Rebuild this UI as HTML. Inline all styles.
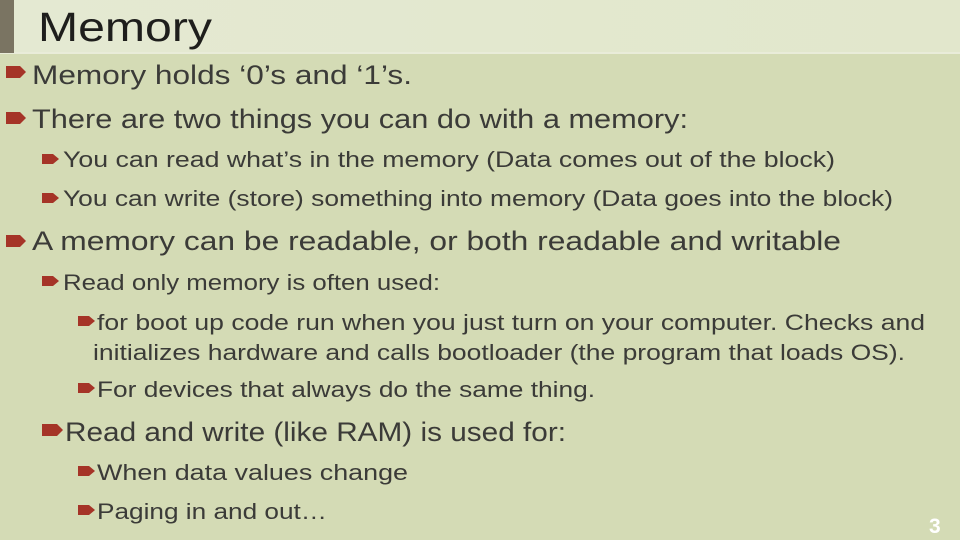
<!DOCTYPE html>
<html><head><meta charset="utf-8"><style>
html,body{margin:0;padding:0;width:960px;height:540px;overflow:hidden;background:#d4dbb5}
svg{display:block}
text{font-family:"Liberation Sans",sans-serif;fill:#3b3b38}
</style></head><body>
<svg width="960" height="540" viewBox="0 0 960 540" xmlns="http://www.w3.org/2000/svg">
<defs>
<linearGradient id="hg" x1="0" x2="1" y1="0" y2="0"><stop offset="0" stop-color="#e4e9d2"/><stop offset="1" stop-color="#e2e7cc"/></linearGradient>
</defs>
<rect x="0" y="0" width="960" height="540" fill="#d4dbb5"/>
<rect x="0" y="0" width="960" height="53" fill="url(#hg)"/>
<rect x="0" y="52" width="960" height="2" fill="#e9ecd9"/>
<rect x="0" y="0" width="14" height="53" fill="#7a7462"/>
<text x="38" y="41" font-size="41" textLength="174" lengthAdjust="spacingAndGlyphs" style="fill:#1e1e1c">Memory</text>

<g fill="#a53427">
<polygon points="6,66 20,66 26,72 20,78 6,78"/>
<polygon points="6,112 20,112 26,118 20,124 6,124"/>
<polygon points="42,154 53,154 59,159 53,164 42,164"/>
<polygon points="42,193 53,193 59,198 53,203 42,203"/>
<polygon points="6,235 20,235 26,241 20,247 6,247"/>
<polygon points="42,276 53,276 59,281 53,286 42,286"/>
<polygon points="78,316 89,316 95,321 89,326 78,326"/>
<polygon points="78,383 89,383 95,388 89,393 78,393"/>
<polygon points="42,424 57,424 63,430 57,436 42,436"/>
<polygon points="78,466 89,466 95,471 89,476 78,476"/>
<polygon points="78,505 89,505 95,510 89,515 78,515"/>
</g>

<text x="32" y="84" font-size="26.5" textLength="380" lengthAdjust="spacingAndGlyphs">Memory holds ‘0’s and ‘1’s.</text>
<text x="32" y="128" font-size="26.5" textLength="656" lengthAdjust="spacingAndGlyphs">There are two things you can do with a memory:</text>
<text x="63" y="167" font-size="22" textLength="772" lengthAdjust="spacingAndGlyphs">You can read what’s in the memory (Data comes out of the block)</text>
<text x="63" y="206" font-size="22" textLength="830" lengthAdjust="spacingAndGlyphs">You can write (store) something into memory (Data goes into the block)</text>
<text x="32" y="250" font-size="26.5" textLength="809" lengthAdjust="spacingAndGlyphs">A memory can be readable, or both readable and writable</text>
<text x="63" y="290" font-size="22" textLength="377" lengthAdjust="spacingAndGlyphs">Read only memory is often used:</text>
<text x="97" y="330" font-size="22" textLength="828" lengthAdjust="spacingAndGlyphs">for boot up code run when you just turn on your computer. Checks and</text>
<text x="93" y="360" font-size="22" textLength="812" lengthAdjust="spacingAndGlyphs">initializes hardware and calls bootloader (the program that loads OS).</text>
<text x="97" y="397" font-size="22" textLength="498" lengthAdjust="spacingAndGlyphs">For devices that always do the same thing.</text>
<text x="65" y="441" font-size="26.5" textLength="501" lengthAdjust="spacingAndGlyphs">Read and write (like RAM) is used for:</text>
<text x="97" y="480" font-size="22" textLength="311" lengthAdjust="spacingAndGlyphs">When data values change</text>
<text x="97" y="519" font-size="22" textLength="230" lengthAdjust="spacingAndGlyphs">Paging in and out…</text>
<text x="929" y="533" font-size="21" font-weight="bold" style="fill:#ffffff">3</text>
</svg>
</body></html>
